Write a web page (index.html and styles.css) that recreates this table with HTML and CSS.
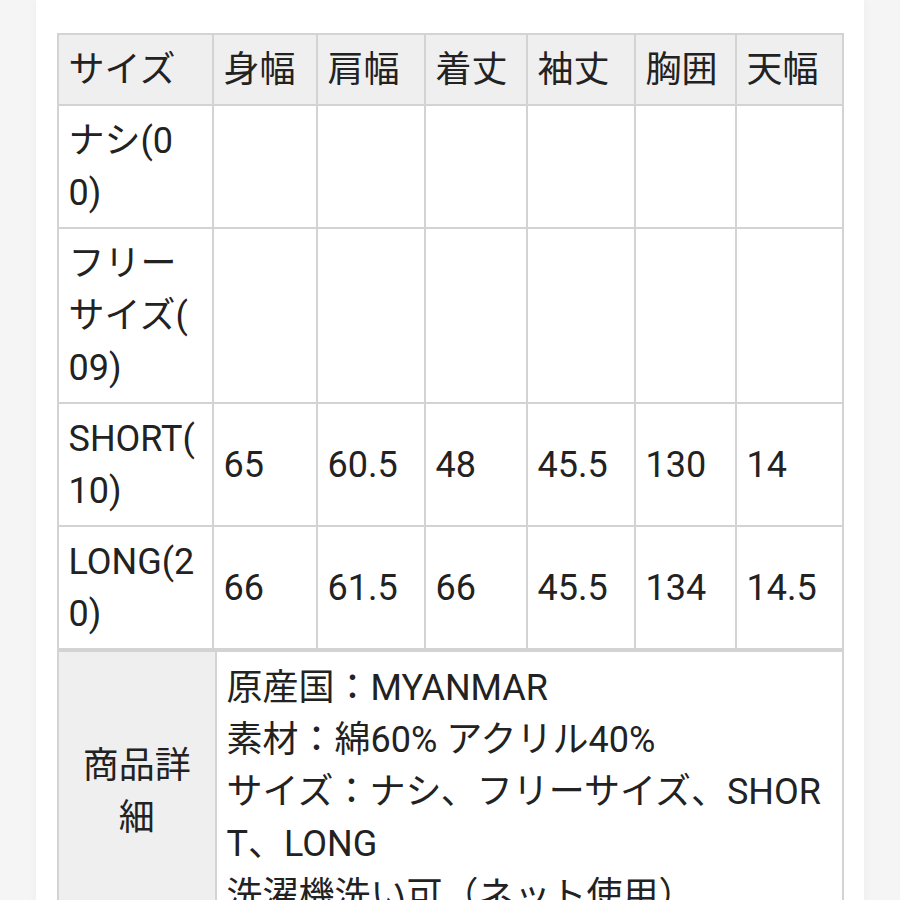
FILE: index.html
```html
<!DOCTYPE html>
<html lang="ja">
<head>
<meta charset="utf-8">
<title>サイズ表</title>
<link rel="stylesheet" href="styles.css">
</head>
<body>
<div class="page">
  <table class="size-table">
    <colgroup>
      <col class="c1"><col class="c2"><col class="c3"><col class="c4"><col class="c5"><col class="c6"><col class="c7">
    </colgroup>
    <thead>
      <tr><th>サイズ</th><th>身幅</th><th>肩幅</th><th>着丈</th><th>袖丈</th><th>胸囲</th><th>天幅</th></tr>
    </thead>
    <tbody>
      <tr><td>ナシ(0<br>0)</td><td></td><td></td><td></td><td></td><td></td><td></td></tr>
      <tr><td>フリー<br>サイズ(<br>09)</td><td></td><td></td><td></td><td></td><td></td><td></td></tr>
      <tr><td>SHORT(<br>10)</td><td>65</td><td>60.5</td><td>48</td><td>45.5</td><td>130</td><td>14</td></tr>
      <tr><td>LONG(2<br>0)</td><td>66</td><td>61.5</td><td>66</td><td>45.5</td><td>134</td><td>14.5</td></tr>
    </tbody>
  </table>
  <table class="detail-table">
    <colgroup><col class="d1"><col class="d2"></colgroup>
    <tr>
      <th>商品詳<br>細</th>
      <td>原産国：MYANMAR<br>素材：綿60% アクリル40%<br>サイズ：ナシ、フリーサイズ、SHOR<br>T、LONG<br>洗濯機洗い可（ネット使用）</td>
    </tr>
  </table>
</div>
</body>
</html>
```
FILE: styles.css
```css
html, body {
  margin: 0;
  padding: 0;
}
body {
  background: #f5f5f5;
  font-family: Roboto, "Noto Sans CJK JP", sans-serif;
  color: #222222;
}
.page {
  margin: 0 36px;
  background: #ffffff;
  padding: 33px 22px 0 21px;
  min-height: 900px;
  box-sizing: border-box;
  box-shadow: 0 0 10px rgba(0, 0, 0, 0.04);
}
table {
  border-collapse: collapse;
  table-layout: fixed;
  width: 785px;
  font-size: 36px;
  line-height: 52px;
}
th, td {
  border: 2px solid #d3d3d3;
  padding: 8.5px 10px 8.5px 9.5px;
  text-align: left;
  vertical-align: middle;
  font-weight: normal;
  white-space: nowrap;
}
.size-table thead th {
  background: #efefef;
}
.c1 { width: 155px; }
.c2 { width: 104px; }
.c3 { width: 108px; }
.c4 { width: 102px; }
.c5 { width: 108px; }
.c6 { width: 101px; }
.c7 { width: 107px; }
.d1 { width: 158px; }
.d2 { width: 627px; }
.detail-table th {
  background: #efefef;
  text-align: center;
}
.detail-table td {
  padding-top: 10px;
  padding-bottom: 10px;
}
```
